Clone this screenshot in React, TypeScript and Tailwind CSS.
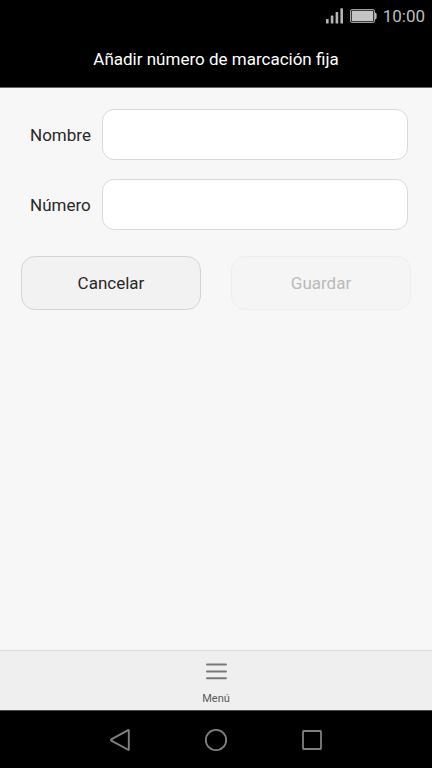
import React, { useState } from 'react';

const SignalIcon = () => (
  <svg width="18" height="16" viewBox="0 0 18 16" fill="#b5b5b5" aria-hidden="true">
    <rect x="0" y="11" width="2.6" height="4.4" rx="0.5" />
    <rect x="4.8" y="7.6" width="2.6" height="7.8" rx="0.5" />
    <rect x="9.6" y="4" width="2.6" height="11.4" rx="0.5" />
    <rect x="14.4" y="0.2" width="2.6" height="15.2" rx="0.5" />
  </svg>
);

const BatteryIcon = () => (
  <svg width="27" height="14" viewBox="0 0 27 14" fill="none" aria-hidden="true">
    <rect x="0.5" y="0.5" width="24" height="13" rx="1.5" stroke="#a0a0a0" />
    <rect x="1" y="1" width="23" height="12" rx="1" fill="#3c3c3c" />
    <rect x="2" y="2" width="21" height="10" fill="#c4c4c4" />
    <path d="M25 3.5q1.6.4 1.6 1.8v3.4q0 1.4-1.6 1.8z" fill="#bdbdbd" />
  </svg>
);

interface FieldProps {
  id: string;
  label: string;
  value: string;
  type?: string;
  onChange: (value: string) => void;
}

const Field: React.FC<FieldProps> = ({ id, label, value, type = 'text', onChange }) => (
  <div className="flex items-center">
    <label htmlFor={id} className="w-[72px] shrink-0">
      {label}
    </label>
    <input
      id={id}
      type={type}
      value={value}
      onChange={(e) => onChange(e.target.value)}
      className="h-[51px] min-w-0 flex-1 rounded-xl border border-[#d9d9d9] bg-white px-3 outline-none"
    />
  </div>
);

const App: React.FC = () => {
  const [name, setName] = useState('');
  const [number, setNumber] = useState('');

  const handleCancel = () => {
    setName('');
    setNumber('');
  };

  return (
    <div className="flex min-h-screen flex-col bg-[#f7f7f7] font-['Roboto',sans-serif] text-[17px] leading-6 text-[#282828]">
      {/* Status bar and title */}
      <header className="border-b border-[#6b6468] bg-black">
        <div className="flex h-8 items-center justify-end gap-[6px] pr-[7px] text-[#bdbdbd]">
          <SignalIcon />
          <BatteryIcon />
          <span>10:00</span>
        </div>
        <h1 className="flex h-[55px] items-center justify-center pb-[2px] text-white">
          Añadir número de marcación fija
        </h1>
      </header>

      {/* Form */}
      <main className="flex-1 pt-[21px]">
        <form onSubmit={(e) => e.preventDefault()}>
          <div className="flex flex-col gap-[19px] pr-6 pl-[30px]">
            <Field id="name" label="Nombre" value={name} onChange={setName} />
            <Field id="number" label="Número" type="tel" value={number} onChange={setNumber} />
          </div>
          <div className="mt-[26px] grid grid-cols-2 gap-[30px] px-[21px]">
            <button
              type="button"
              onClick={handleCancel}
              className="h-[54px] rounded-[14px] border border-[#d4d4d4] bg-[#f2f2f2]"
            >
              Cancelar
            </button>
            <button
              type="submit"
              disabled={!number}
              className="h-[54px] rounded-[14px] border border-[#d4d4d4] bg-[#f2f2f2] disabled:border-[#eeeeee] disabled:bg-[#f5f5f5] disabled:text-[#bababa]"
            >
              Guardar
            </button>
          </div>
        </form>
      </main>

      {/* Menu */}
      <div className="flex justify-center border-t border-[#dcdcdc] bg-[#efefef]">
        <button type="button" className="flex h-[59px] w-24 flex-col items-center justify-between pt-3 pb-[3px]">
          <svg width="21" height="17" viewBox="0 0 21 17" fill="none" stroke="#7d7878" strokeWidth="2" strokeLinecap="round" aria-hidden="true">
            <path d="M1 1.6h19M1 8.4h19M1 15.2h19" />
          </svg>
          <span className="text-[11px] leading-4 text-[#5a5a5a]">Menú</span>
        </button>
      </div>

      {/* Navigation bar */}
      <nav className="flex h-[58px] items-center justify-center gap-[72px] border-t border-[#4a4a4a] bg-black">
        <button type="button" aria-label="Atrás">
          <svg width="24" height="24" viewBox="0 0 24 24" fill="none" stroke="#808080" strokeWidth="1.9" strokeLinejoin="round" aria-hidden="true">
            <path d="M20.8 2.6v18.8q0 .8-.7.4L3.3 12.6q-.8-.6 0-1.2L20.1 2.2q.7-.4.7.4z" />
          </svg>
        </button>
        <button type="button" aria-label="Inicio">
          <svg width="24" height="24" viewBox="0 0 24 24" fill="none" stroke="#808080" strokeWidth="1.8" aria-hidden="true">
            <circle cx="12" cy="12" r="10.2" />
          </svg>
        </button>
        <button type="button" aria-label="Recientes">
          <svg width="24" height="24" viewBox="0 0 24 24" fill="none" stroke="#808080" strokeWidth="1.8" aria-hidden="true">
            <rect x="3" y="3" width="18" height="18" rx="0.8" />
          </svg>
        </button>
      </nav>
    </div>
  );
};

export default App;
